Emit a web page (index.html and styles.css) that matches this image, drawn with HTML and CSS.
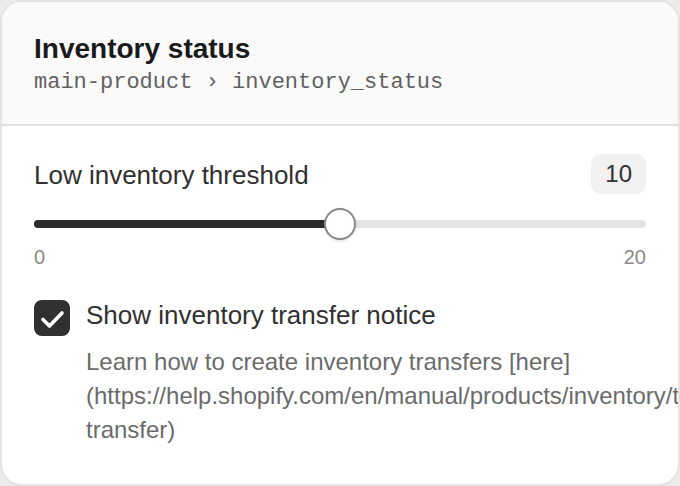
FILE: index.html
```html
<!DOCTYPE html>
<html lang="en">
<head>
<meta charset="UTF-8" />
<meta name="viewport" content="width=device-width, initial-scale=1" />
<title>Inventory status</title>
<link rel="stylesheet" href="styles.css">
</head>
<body>
  <div class="card">
    <div class="card-header">
      <h1 class="card-title">Inventory status</h1>
      <div class="card-path">main-product › inventory_status</div>
    </div>

    <div class="card-body">
      <div class="field-row">
        <span class="field-label">Low inventory threshold</span>
        <span class="value-badge">10</span>
      </div>

      <div class="slider">
        <div class="slider-track">
          <div class="slider-fill" style="width: 50%"></div>
        </div>
        <div class="slider-thumb" style="left: 50%"></div>
      </div>
      <div class="slider-range">
        <span>0</span>
        <span>20</span>
      </div>

      <div class="check-row">
        <span class="checkbox">
          <svg width="36" height="36" viewBox="0 0 36 36">
            <path d="M9 19.5 L15.5 26 L28 13" fill="none" stroke="#fff" stroke-width="3.6" stroke-linecap="round" stroke-linejoin="round"/>
          </svg>
        </span>
        <div class="check-text">
          <div class="check-label">Show inventory transfer notice</div>
          <p class="check-help">Learn how to create inventory transfers [here](https://help.shopify.com/en/manual/products/inventory/transfers/create-transfer)</p>
        </div>
      </div>
    </div>
  </div>
</body>
</html>
```

FILE: styles.css
```css
body {
  margin: 0;
  background: #ebebeb;
  font-family: 'Liberation Sans', Arial, sans-serif;
  color: #303030;
}

.card {
  box-sizing: border-box;
  width: 680px;
  height: 486px;
  border: 2px solid #e3e3e3;
  border-radius: 22px;
  background: #fff;
  overflow: hidden;
}

/* Header */
.card-header {
  padding: 30px 32px 27px;
  background: #fafafa;
  border-bottom: 2px solid #e3e3e3;
}

.card-title {
  margin: 0;
  font-size: 28px;
  line-height: 34px;
  font-weight: 700;
  color: #1a1a1a;
}

.card-path {
  margin-top: 3px;
  font-family: 'Liberation Mono', 'Courier New', monospace;
  font-size: 22px;
  line-height: 28px;
  color: #616161;
}

/* Body */
.card-body {
  padding: 28px 32px 0;
}

.field-row {
  display: flex;
  justify-content: space-between;
  align-items: center;
}

.field-label {
  font-size: 26px;
  line-height: 32px;
  padding-top: 1px;
}

.value-badge {
  padding: 0 14px;
  height: 40px;
  line-height: 40px;
  border-radius: 10px;
  background: #f1f1f1;
  font-size: 24px;
}

/* Slider */
.slider {
  position: relative;
  height: 32px;
  margin-top: 14px;
  display: flex;
  align-items: center;
}

.slider-track {
  width: 100%;
  height: 8px;
  border-radius: 4px;
  background: #e3e3e3;
}

.slider-fill {
  height: 100%;
  border-radius: 4px;
  background: #2b2b2b;
}

.slider-thumb {
  position: absolute;
  top: 0;
  width: 32px;
  height: 32px;
  box-sizing: border-box;
  border: 2px solid #8a8a8a;
  border-radius: 50%;
  background: #fff;
  box-shadow: 0 1px 3px rgba(0, 0, 0, 0.15);
  transform: translateX(-50%);
}

.slider-range {
  display: flex;
  justify-content: space-between;
  margin-top: 5px;
  font-size: 20px;
  line-height: 24px;
  color: #8a8a8a;
}

/* Checkbox */
.check-row {
  display: flex;
  gap: 16px;
  margin-top: 31px;
}

.checkbox {
  flex: none;
  width: 36px;
  height: 36px;
  border-radius: 8px;
  background: #303030;
}

.checkbox svg {
  display: block;
}

.check-text {
  min-width: 0;
}

.check-label {
  font-size: 26px;
  line-height: 32px;
  margin-top: -1px;
}

.check-help {
  margin: 14px 0 0;
  font-size: 24px;
  line-height: 34px;
  color: #6b6b6b;
}
```
